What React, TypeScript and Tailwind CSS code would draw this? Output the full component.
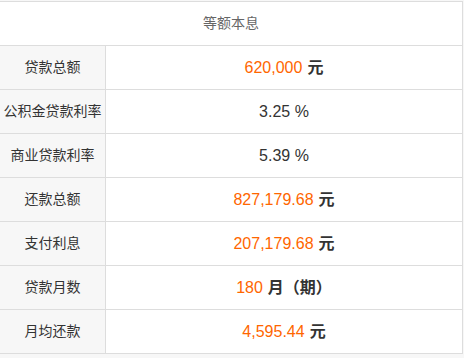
const rows: { label: string; value: string; unit?: string; plain?: boolean }[] = [
  { label: "贷款总额", value: "620,000", unit: "元" },
  { label: "公积金贷款利率", value: "3.25 %", plain: true },
  { label: "商业贷款利率", value: "5.39 %", plain: true },
  { label: "还款总额", value: "827,179.68", unit: "元" },
  { label: "支付利息", value: "207,179.68", unit: "元" },
  { label: "贷款月数", value: "180", unit: "月（期）" },
  { label: "月均还款", value: "4,595.44", unit: "元" },
];

export default function App() {
  return (
    <div className="w-[464px] h-[358px] bg-[#f7f7f7] pt-px" style={{ fontFamily: '"Liberation Sans", "Noto Sans CJK SC", sans-serif' }}>
      <div className="w-[463px] bg-white border-t border-r border-[#dddddd]">
        <div className="h-[44px] flex items-center justify-center text-[14px] text-[#666] border-b border-[#dddddd]">
          等额本息
        </div>
        {rows.map((r) => (
          <div key={r.label} className="grid grid-cols-[106px_1fr] h-[44px] border-b border-[#dddddd]">
            <div className="bg-[#f7f7f7] border-r border-[#dddddd] flex items-center justify-center text-[14px] text-[#333]">
              {r.label}
            </div>
            <div className="flex items-center justify-center text-[16px]">
              {r.plain ? (
                <span className="text-[#333]">{r.value}</span>
              ) : (
                <>
                  <span className="text-[#ff6600]">{r.value}</span>
                  <span className="ml-[5px] font-bold text-[#333]">{r.unit}</span>
                </>
              )}
            </div>
          </div>
        ))}
      </div>
    </div>
  );
}
